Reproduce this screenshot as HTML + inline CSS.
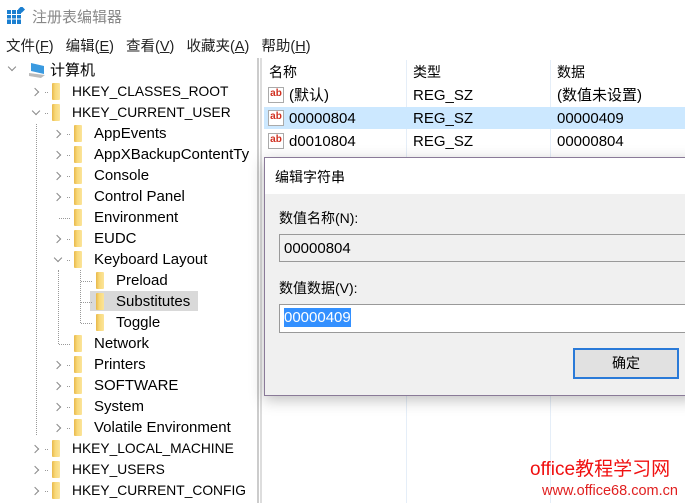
<!DOCTYPE html><html><head><meta charset="utf-8"><style>
body{margin:0;width:685px;height:503px;overflow:hidden;background:#fff;font-family:"Liberation Sans","Noto Sans CJK SC",sans-serif;color:#000;position:relative}
.a{position:absolute;white-space:nowrap}
.t{font-size:15px;line-height:21px}
.f{position:absolute;width:8px;height:17px;background:linear-gradient(90deg,#e8b84a,#f8d878 40%,#fbe49a);border-radius:1px}
.ar{position:absolute;width:5px;height:5px;border-right:1.5px solid #888;border-bottom:1.5px solid #888}
.r{transform:rotate(-45deg)}.d{transform:rotate(45deg)}
.dot{position:absolute;border-top:1px dotted #999;width:8px}
.vd{position:absolute;border-left:1px dotted #999}
.ab{position:absolute;width:16px;height:16px;border:1px solid #aaa;background:#fff;font:bold 10px "Liberation Sans";color:#d03020;line-height:11px;text-align:center;box-sizing:border-box}
</style></head><body>
<div class="a" style="left:7px;top:7px;width:18px;height:17px"><svg width="18" height="17"><rect x="0" y="3" width="14" height="14" fill="#1b7fd0"/><path d="M0 7.5h14M0 12h14M4.5 3v14M9.5 3v14" stroke="#fff" stroke-width="1"/><rect x="12" y="0" width="5" height="5" fill="#1b7fd0" transform="rotate(45 14.5 2.5)"/></svg></div>
<div class="a" style="left:32px;top:6px;font-size:15px;color:#888">注册表编辑器</div>
<div class="a" style="left:6px;top:35px;font-size:14.5px;color:#222">文件(<u>F</u>)&nbsp;&nbsp;&nbsp;编辑(<u>E</u>)&nbsp;&nbsp;&nbsp;查看(<u>V</u>)&nbsp;&nbsp;&nbsp;收藏夹(<u>A</u>)&nbsp;&nbsp;&nbsp;帮助(<u>H</u>)</div>
<div class="a" style="left:0;top:58px;width:257px;height:445px;border-right:2px solid #ccc"></div>
<div class="a" style="left:260px;top:58px;width:2px;height:445px;background:#ddd"></div>
<div class="vd" style="left:36px;top:124px;height:311px"></div>
<div class="vd" style="left:58px;top:270px;height:74px"></div>
<div class="vd" style="left:80px;top:270px;height:53px"></div>
<div class="a" style="left:90px;top:291px;width:108px;height:20px;background:#d9d9d9"></div>
<div class="ar d" style="left:9px;top:64px"></div>
<svg class="a" style="left:28px;top:61px" width="20" height="18"><path d="M3 2l13 3v8l-13-3z" fill="#3a9ae0"/><path d="M1 12l16 2-4 3-12-2z" fill="#bbb"/></svg>
<div class="a t" style="left:50px;top:60px">计算机</div>
<div id="tree"></div>
<script>
var it=[[1,'r','HKEY_CLASSES_ROOT'],[1,'d','HKEY_CURRENT_USER'],[2,'r','AppEvents'],[2,'r','AppXBackupContentTy'],[2,'r','Console'],[2,'r','Control Panel'],[2,'','Environment'],[2,'r','EUDC'],[2,'d','Keyboard Layout'],[3,'','Preload'],[3,'','Substitutes'],[3,'','Toggle'],[2,'','Network'],[2,'r','Printers'],[2,'r','SOFTWARE'],[2,'r','System'],[2,'r','Volatile Environment'],[1,'r','HKEY_LOCAL_MACHINE'],[1,'r','HKEY_USERS'],[1,'r','HKEY_CURRENT_CONFIG']];
var h='';it.forEach(function(e,i){var y=81+i*21,l=e[0];var ax=l==1?32:54,fx=l==1?52:l==2?74:96,tx=l==1?72:l==2?94:116;
var fs=l==1?'font-size:13.8px;':'';
if(e[1]=='r')h+='<div class="ar r" style="left:'+(ax)+'px;top:'+(y+8)+'px"></div>';
if(e[1]=='d')h+='<div class="ar d" style="left:'+(ax+1)+'px;top:'+(y+6)+'px"></div>';
if(e[1])h+='<div class="dot" style="left:'+(fx-7)+'px;top:'+(y+11)+'px;width:3px"></div>';
else h+='<div class="dot" style="left:'+(fx-15)+'px;top:'+(y+11)+'px;width:11px"></div>';
h+='<div class="f" style="left:'+fx+'px;top:'+(y+2)+'px"></div><div class="a t" style="left:'+tx+'px;top:'+y+'px;'+fs+'">'+e[2]+'</div>';});
document.getElementById('tree').innerHTML=h;
</script>
<div class="a" style="left:406px;top:60px;width:1px;height:443px;background:#e5eef8"></div>
<div class="a" style="left:550px;top:60px;width:1px;height:443px;background:#e5eef8"></div>
<div class="a t" style="left:269px;top:62px;font-size:14px">名称</div>
<div class="a t" style="left:413px;top:62px;font-size:14px">类型</div>
<div class="a t" style="left:557px;top:62px;font-size:14px">数据</div>
<div class="a" style="left:264px;top:107px;width:421px;height:22px;background:#cce8ff"></div>
<div class="ab" style="left:268px;top:87px">ab</div><div class="a t" style="left:289px;top:85px">(默认)</div><div class="a t" style="left:413px;top:85px">REG_SZ</div><div class="a t" style="left:557px;top:85px">(数值未设置)</div>
<div class="ab" style="left:268px;top:110px">ab</div><div class="a t" style="left:289px;top:108px">00000804</div><div class="a t" style="left:413px;top:108px">REG_SZ</div><div class="a t" style="left:557px;top:108px">00000409</div>
<div class="ab" style="left:268px;top:133px">ab</div><div class="a t" style="left:289px;top:131px">d0010804</div><div class="a t" style="left:413px;top:131px">REG_SZ</div><div class="a t" style="left:557px;top:131px">00000804</div>
<div class="a" style="left:264px;top:157px;width:430px;height:237px;border:1px solid #8a7a98;background:#f0f0f0;box-shadow:0 4px 14px rgba(0,0,0,.25)">
<div class="a" style="left:0;top:0;width:100%;height:36px;background:#fff"></div>
<div class="a t" style="left:10px;top:9px;font-size:14px">编辑字符串</div>
<div class="a t" style="left:14px;top:50px;font-size:14px">数值名称(N):</div>
<div class="a" style="left:14px;top:76px;width:420px;height:28px;border:1px solid #999;background:#f0f0f0;box-sizing:border-box"></div>
<div class="a t" style="left:19px;top:80px">00000804</div>
<div class="a t" style="left:14px;top:120px;font-size:14px">数值数据(V):</div>
<div class="a" style="left:14px;top:146px;width:420px;height:29px;border:1px solid #999;background:#fff;box-sizing:border-box"></div>
<div class="a t" style="left:19px;top:150px;background:#3390ff;color:#fff;line-height:19px">00000409</div>
<div class="a" style="left:308px;top:190px;width:106px;height:31px;border:2px solid #2a7ad8;background:#e1e1e1;box-sizing:border-box;text-align:center;font-size:14px;line-height:27px">确定</div>
</div>
<div class="a" style="left:530px;top:454px;font-size:19px;color:#f01010">office教程学习网</div>
<div class="a" style="left:542px;top:483px;font-size:14.5px;color:#e02020">www.office68.com.cn</div>
</body></html>
